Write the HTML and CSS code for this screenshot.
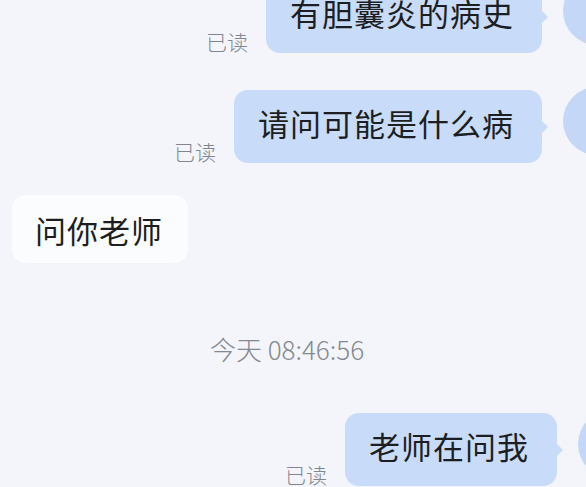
FILE: index.html
```html
<!DOCTYPE html>
<html lang="zh-CN">
<head>
    <meta charset="UTF-8">
    <meta name="viewport" content="width=device-width, initial-scale=1.0">
    <title>聊天</title>
    <link rel="stylesheet" href="styles.css">
</head>
<body>
    <div class="chat">
        <div class="row row-mine">
            <span class="read">已读</span>
            <div class="bubble bubble-mine">有胆囊炎的病史</div>
            <div class="avatar"></div>
        </div>

        <div class="row row-mine row-second">
            <span class="read">已读</span>
            <div class="bubble bubble-mine">请问可能是什么病</div>
            <div class="avatar"></div>
        </div>

        <div class="row row-other">
            <div class="bubble bubble-other">问你老师</div>
        </div>

        <div class="time">今天 08:46:56</div>

        <div class="row row-mine row-last">
            <span class="read">已读</span>
            <div class="bubble bubble-mine">老师在问我</div>
            <div class="avatar"></div>
        </div>
    </div>
</body>
</html>
```

FILE: styles.css
```css
body {
    font-family: "Noto Sans CJK SC", "Noto Sans", sans-serif;
    background-color: #f3f5fa;
    margin: 0;
    width: 586px;
    height: 487px;
    overflow: hidden;
}
.chat {
    display: flex;
    flex-direction: column;
    margin-top: -20px;
}
.row {
    display: flex;
    align-items: flex-start;
}
.row-mine {
    justify-content: flex-end;
}
.row-second {
    margin-top: 37px;
}
.row-other {
    margin-top: 32px;
    padding-left: 12px;
}
.row-last {
    margin-top: 51px;
    margin-right: -15px;
}
.read {
    align-self: flex-end;
    margin: 0 18px 0 0;
    font-size: 21px;
    line-height: 24px;
    font-weight: 300;
    color: #80858f;
}
.bubble {
    position: relative;
    font-size: 31px;
    letter-spacing: 1px;
    line-height: 33px;
    color: #1d1e22;
    border-radius: 14px;
}
.bubble-mine {
    background: #c8dbf8;
    padding: 16px 28px 24px 24px;
}
.bubble-mine::after {
    content: "";
    position: absolute;
    right: -6px;
    top: 50%;
    margin-top: -7px;
    border-left: 7px solid #c8dbf8;
    border-top: 7px solid transparent;
    border-bottom: 7px solid transparent;
}
.bubble-other {
    background: #fbfcfe;
    padding: 18px 25px 17px 23px;
}
.avatar {
    width: 68px;
    height: 68px;
    border-radius: 50%;
    background: #c4d7f6;
    margin: -3px -45px 0 21px;
    flex-shrink: 0;
}
.time {
    margin-top: 72px;
    padding-right: 12px;
    text-align: center;
    font-size: 26px;
    line-height: 27px;
    font-weight: 300;
    color: #858990;
}
```
